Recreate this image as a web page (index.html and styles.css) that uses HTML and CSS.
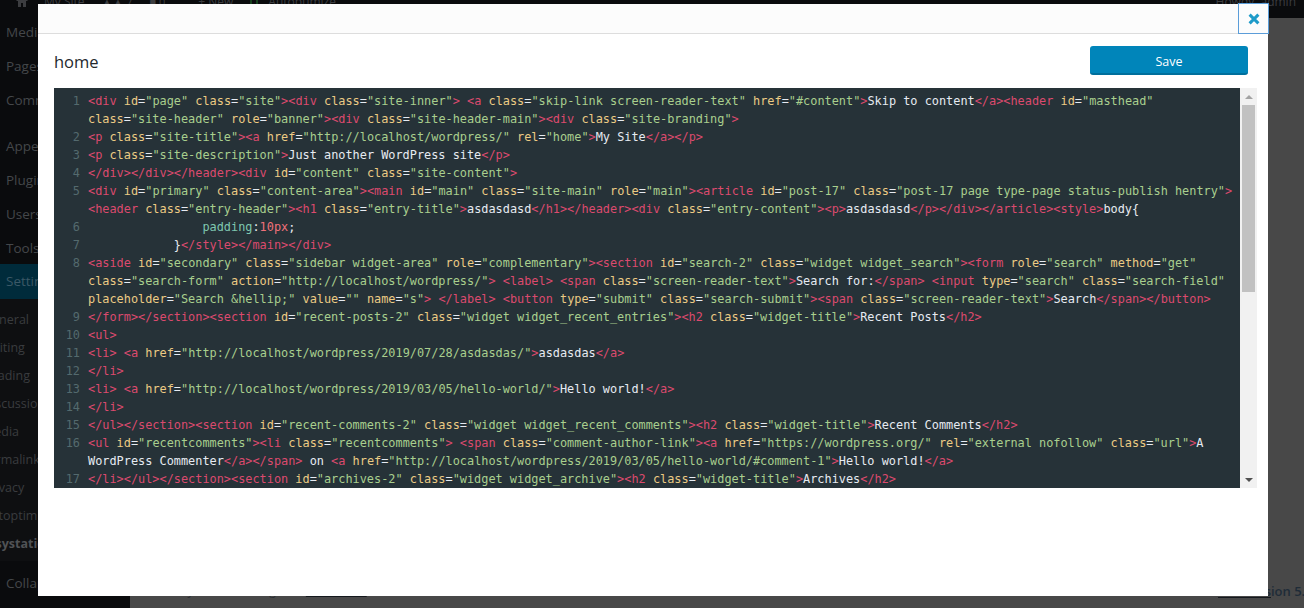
FILE: index.html
```html
<!DOCTYPE html>
<html lang="en">
<head>
<meta charset="utf-8">
<title>home</title>
<link rel="stylesheet" href="styles.css">
</head>
<body>
<div class="admin">
  <div class="topbar">
    <svg class="bar-icon" width="14" height="14" viewBox="0 0 14 14"><path d="M7 1 1 7h2v6h3V9h2v4h3V7h2z" fill="#3c3d40"/></svg>
    <span class="bar-item">My Site</span>
    <span class="bar-item bar-count">▲▲ 7</span>
    <span class="bar-item bar-count">■ 0</span>
    <span class="bar-item bar-new">+ New</span>
    <span class="bar-green"></span>
    <span class="bar-item">Autoptimize</span>
    <span class="bar-howdy">Howdy, admin</span>
  </div>
  <div class="below">
    <nav class="sidebar">
      <a class="menu-item">Media</a>
      <a class="menu-item">Pages</a>
      <a class="menu-item menu-last">Comments</a>
      <a class="menu-item">Appearance</a>
      <a class="menu-item">Plugins</a>
      <a class="menu-item">Users</a>
      <a class="menu-item">Tools</a>
      <a class="menu-item menu-active">Settings</a>
      <div class="submenu">
        <a class="sub-item">General</a>
        <a class="sub-item">Writing</a>
        <a class="sub-item">Reading</a>
        <a class="sub-item">Discussion</a>
        <a class="sub-item">Media</a>
        <a class="sub-item sub-perma">Permalinks</a>
        <a class="sub-item">Privacy</a>
        <a class="sub-item">Autoptimize</a>
        <a class="sub-item sub-bold">Easystatic</a>
      </div>
      <a class="menu-item menu-collapse">Collapse menu</a>
    </nav>
    <main class="content">
      <footer class="foot">
        <span>Thank you for creating with <span class="foot-link">WordPress</span>.</span>
        <span class="foot-version"><span class="foot-link">Get Vers</span>ion 5.3</span>
      </footer>
    </main>
  </div>
</div>

<section class="modal">
  <header class="modal-head">
    <button class="close" aria-label="Close">
      <svg width="12" height="12" viewBox="0 0 12 12"><path d="M1.6 1.6 10.4 10.4M10.4 1.6 1.6 10.4" stroke="#1e9bc9" stroke-width="3" fill="none"/></svg>
    </button>
  </header>
  <div class="modal-body">
    <div class="title-row">
      <h1 class="title">home</h1>
      <button class="save">Save</button>
    </div>
    <div class="editor">
      <div class="code">
<div class="line"><span class="num">1</span><div class="src"><i class="t">&lt;div</i> <i class="a">id</i>=<i class="s">"page"</i> <i class="a">class</i>=<i class="s">"site"</i><i class="t">&gt;&lt;div</i> <i class="a">class</i>=<i class="s">"site-inner"</i><i class="t">&gt;</i> <i class="t">&lt;a</i> <i class="a">class</i>=<i class="s">"skip-link screen-reader-text"</i> <i class="a">href</i>=<i class="s">"#content"</i><i class="t">&gt;</i>Skip to content<i class="t">&lt;/a&gt;&lt;header</i> <i class="a">id</i>=<i class="s">"masthead"</i> <i class="a">class</i>=<i class="s">"site-header"</i> <i class="a">role</i>=<i class="s">"banner"</i><i class="t">&gt;&lt;div</i> <i class="a">class</i>=<i class="s">"site-header-main"</i><i class="t">&gt;&lt;div</i> <i class="a">class</i>=<i class="s">"site-branding"</i><i class="t">&gt;</i></div></div>
<div class="line"><span class="num">2</span><div class="src"><i class="t">&lt;p</i> <i class="a">class</i>=<i class="s">"site-title"</i><i class="t">&gt;&lt;a</i> <i class="a">href</i>=<i class="s">"http://localhost/wordpress/"</i> <i class="a">rel</i>=<i class="s">"home"</i><i class="t">&gt;</i>My Site<i class="t">&lt;/a&gt;&lt;/p&gt;</i></div></div>
<div class="line"><span class="num">3</span><div class="src"><i class="t">&lt;p</i> <i class="a">class</i>=<i class="s">"site-description"</i><i class="t">&gt;</i>Just another WordPress site<i class="t">&lt;/p&gt;</i></div></div>
<div class="line"><span class="num">4</span><div class="src"><i class="t">&lt;/div&gt;&lt;/div&gt;&lt;/header&gt;&lt;div</i> <i class="a">id</i>=<i class="s">"content"</i> <i class="a">class</i>=<i class="s">"site-content"</i><i class="t">&gt;</i></div></div>
<div class="line"><span class="num">5</span><div class="src"><i class="t">&lt;div</i> <i class="a">id</i>=<i class="s">"primary"</i> <i class="a">class</i>=<i class="s">"content-area"</i><i class="t">&gt;&lt;main</i> <i class="a">id</i>=<i class="s">"main"</i> <i class="a">class</i>=<i class="s">"site-main"</i> <i class="a">role</i>=<i class="s">"main"</i><i class="t">&gt;&lt;article</i> <i class="a">id</i>=<i class="s">"post-17"</i> <i class="a">class</i>=<i class="s">"post-17 page type-page status-publish hentry"</i><i class="t">&gt;</i> <i class="t">&lt;header</i> <i class="a">class</i>=<i class="s">"entry-header"</i><i class="t">&gt;&lt;h1</i> <i class="a">class</i>=<i class="s">"entry-title"</i><i class="t">&gt;</i>asdasdasd<i class="t">&lt;/h1&gt;&lt;/header&gt;&lt;div</i> <i class="a">class</i>=<i class="s">"entry-content"</i><i class="t">&gt;&lt;p&gt;</i>asdasdasd<i class="t">&lt;/p&gt;&lt;/div&gt;&lt;/article&gt;&lt;style&gt;</i>body{</div></div>
<div class="line"><span class="num">6</span><div class="src">                <i class="p">padding</i>:<i class="n">10px</i>;</div></div>
<div class="line"><span class="num">7</span><div class="src">            }<i class="t">&lt;/style&gt;&lt;/main&gt;&lt;/div&gt;</i></div></div>
<div class="line"><span class="num">8</span><div class="src"><i class="t">&lt;aside</i> <i class="a">id</i>=<i class="s">"secondary"</i> <i class="a">class</i>=<i class="s">"sidebar widget-area"</i> <i class="a">role</i>=<i class="s">"complementary"</i><i class="t">&gt;&lt;section</i> <i class="a">id</i>=<i class="s">"search-2"</i> <i class="a">class</i>=<i class="s">"widget widget_search"</i><i class="t">&gt;&lt;form</i> <i class="a">role</i>=<i class="s">"search"</i> <i class="a">method</i>=<i class="s">"get"</i> <i class="a">class</i>=<i class="s">"search-form"</i> <i class="a">action</i>=<i class="s">"http://localhost/wordpress/"</i><i class="t">&gt;</i> <i class="t">&lt;label&gt;</i> <i class="t">&lt;span</i> <i class="a">class</i>=<i class="s">"screen-reader-text"</i><i class="t">&gt;</i>Search for:<i class="t">&lt;/span&gt;</i> <i class="t">&lt;input</i> <i class="a">type</i>=<i class="s">"search"</i> <i class="a">class</i>=<i class="s">"search-field"</i> <i class="a">placeholder</i>=<i class="s">"Search &amp;hellip;"</i> <i class="a">value</i>=<i class="s">""</i> <i class="a">name</i>=<i class="s">"s"</i><i class="t">&gt;</i> <i class="t">&lt;/label&gt;</i> <i class="t">&lt;button</i> <i class="a">type</i>=<i class="s">"submit"</i> <i class="a">class</i>=<i class="s">"search-submit"</i><i class="t">&gt;&lt;span</i> <i class="a">class</i>=<i class="s">"screen-reader-text"</i><i class="t">&gt;</i>Search<i class="t">&lt;/span&gt;&lt;/button&gt;</i></div></div>
<div class="line"><span class="num">9</span><div class="src"><i class="t">&lt;/form&gt;&lt;/section&gt;&lt;section</i> <i class="a">id</i>=<i class="s">"recent-posts-2"</i> <i class="a">class</i>=<i class="s">"widget widget_recent_entries"</i><i class="t">&gt;&lt;h2</i> <i class="a">class</i>=<i class="s">"widget-title"</i><i class="t">&gt;</i>Recent Posts<i class="t">&lt;/h2&gt;</i></div></div>
<div class="line"><span class="num">10</span><div class="src"><i class="t">&lt;ul&gt;</i></div></div>
<div class="line"><span class="num">11</span><div class="src"><i class="t">&lt;li&gt;</i> <i class="t">&lt;a</i> <i class="a">href</i>=<i class="s">"http://localhost/wordpress/2019/07/28/asdasdas/"</i><i class="t">&gt;</i>asdasdas<i class="t">&lt;/a&gt;</i></div></div>
<div class="line"><span class="num">12</span><div class="src"><i class="t">&lt;/li&gt;</i></div></div>
<div class="line"><span class="num">13</span><div class="src"><i class="t">&lt;li&gt;</i> <i class="t">&lt;a</i> <i class="a">href</i>=<i class="s">"http://localhost/wordpress/2019/03/05/hello-world/"</i><i class="t">&gt;</i>Hello world!<i class="t">&lt;/a&gt;</i></div></div>
<div class="line"><span class="num">14</span><div class="src"><i class="t">&lt;/li&gt;</i></div></div>
<div class="line"><span class="num">15</span><div class="src"><i class="t">&lt;/ul&gt;&lt;/section&gt;&lt;section</i> <i class="a">id</i>=<i class="s">"recent-comments-2"</i> <i class="a">class</i>=<i class="s">"widget widget_recent_comments"</i><i class="t">&gt;&lt;h2</i> <i class="a">class</i>=<i class="s">"widget-title"</i><i class="t">&gt;</i>Recent Comments<i class="t">&lt;/h2&gt;</i></div></div>
<div class="line"><span class="num">16</span><div class="src"><i class="t">&lt;ul</i> <i class="a">id</i>=<i class="s">"recentcomments"</i><i class="t">&gt;&lt;li</i> <i class="a">class</i>=<i class="s">"recentcomments"</i><i class="t">&gt;</i> <i class="t">&lt;span</i> <i class="a">class</i>=<i class="s">"comment-author-link"</i><i class="t">&gt;&lt;a</i> <i class="a">href</i>=<i class="s">"https://wordpress.org/"</i> <i class="a">rel</i>=<i class="s">"external nofollow"</i> <i class="a">class</i>=<i class="s">"url"</i><i class="t">&gt;</i>A WordPress Commenter<i class="t">&lt;/a&gt;&lt;/span&gt;</i> on <i class="t">&lt;a</i> <i class="a">href</i>=<i class="s">"http://localhost/wordpress/2019/03/05/hello-world/#comment-1"</i><i class="t">&gt;</i>Hello world!<i class="t">&lt;/a&gt;</i></div></div>
<div class="line"><span class="num">17</span><div class="src"><i class="t">&lt;/li&gt;&lt;/ul&gt;&lt;/section&gt;&lt;section</i> <i class="a">id</i>=<i class="s">"archives-2"</i> <i class="a">class</i>=<i class="s">"widget widget_archive"</i><i class="t">&gt;&lt;h2</i> <i class="a">class</i>=<i class="s">"widget-title"</i><i class="t">&gt;</i>Archives<i class="t">&lt;/h2&gt;</i></div></div>
      </div>
      <div class="scrollbar">
        <span class="sb-btn"><span class="arrow-up"></span></span>
        <span class="sb-thumb"></span>
        <span class="sb-rest"></span>
        <span class="sb-btn"><span class="arrow-down"></span></span>
      </div>
    </div>
  </div>
</section>
</body>
</html>
```
FILE: styles.css
```css
* { box-sizing: border-box; }
html, body { margin: 0; height: 100%; }
body { overflow: hidden; font-family: "Open Sans", "Liberation Sans", sans-serif; background: #484848; }

.admin { display: flex; flex-direction: column; width: 1304px; height: 608px; }

.topbar { height: 18px; flex: none; background: #0a0b0d; display: flex; align-items: flex-start; padding-left: 15px; color: #3c3d40; font-size: 12px; line-height: 18px; overflow: hidden; }
.topbar > * { margin-top: -7px; }
.bar-icon { margin-top: -6px; margin-right: 15px; }
.bar-item { margin-right: 17px; }
.bar-count { font-size: 11px; }
.bar-new { margin-left: 16px; }
.bar-green { width: 8px; height: 14px; border: 2px solid #14401c; margin-right: 10px; }
.bar-howdy { margin-left: auto; margin-right: 8px; }

.below { flex: 1; display: flex; min-height: 0; }

.sidebar { width: 130px; flex: none; background: #0a0b0d; display: flex; flex-direction: column; overflow: hidden; }
.menu-item { display: block; height: 34px; line-height: 34px; padding-left: 6px; font-size: 13.5px; color: #44474a; white-space: nowrap; flex: none; }
.menu-item:first-child { margin-top: -3px; }
.menu-last { margin-bottom: 12px; }
.menu-active { height: 35px; margin-top: -1px; background: #002b3b; color: #3b5866; }
.submenu { background: #0e0f11; padding: 7px 0; height: 262px; flex: none; }
.sub-item { display: block; height: 28px; line-height: 28px; font-size: 12.5px; color: #3a3c3f; margin-left: -17px; white-space: nowrap; }
.sub-perma { margin-left: -19px; }
.sub-bold { font-weight: 700; margin-left: -19px; color: #505255; }
.menu-collapse { margin-top: 5px; }

.content { flex: 1; display: flex; flex-direction: column; justify-content: flex-end; min-width: 0; overflow: hidden; }
.foot { display: flex; justify-content: space-between; height: 26px; padding-left: 20px; font-size: 12px; line-height: 18px; color: #2a2e33; white-space: nowrap; }
.foot-link { text-decoration: underline; text-decoration-color: #14181c; }
.foot-version { width: 86px; flex: none; font-size: 13px; font-weight: 600; color: #1f2c38; }

.modal { position: absolute; left: 38px; top: 4px; width: 1230px; height: 592px; background: #fff; display: flex; flex-direction: column; }
.modal-head { height: 30px; flex: none; background: #fcfcfc; border-bottom: 1px solid #ddd; display: flex; justify-content: flex-end; }
.close { width: 31px; height: 31px; margin: -1px -1px 0 0; padding: 0; background: transparent; border: 1px solid #5b9dd9; display: flex; align-items: center; justify-content: center; }
.modal-body { padding: 12px 11px 0 16px; }
.title-row { display: flex; justify-content: space-between; align-items: flex-start; padding-right: 9px; height: 42px; }
.title { margin: 4px 0 0; font-size: 16.5px; line-height: 24px; font-weight: 400; color: #23282d; }
.save { width: 158px; height: 29px; padding: 4px 0 0; background: #0085ba; border: 0; border-bottom: 2px solid #006f9c; border-radius: 3px; color: #fff; font: 12.5px/24px "Open Sans", "Liberation Sans", sans-serif; }

.editor { display: flex; height: 400px; background: #263238; }
.code { flex: 1; min-width: 0; height: 400px; padding-top: 4px; overflow: hidden; font-family: "DejaVu Sans Mono", "Liberation Mono", monospace; font-size: 11.88px; line-height: 18px; color: #e6ebf2; }
.line { display: flex; }
.num { width: 26px; flex: none; text-align: right; color: #546a6e; }
.src { width: 1152px; margin-left: 8px; white-space: pre-wrap; }
.src i { font-style: normal; }
.t { color: #dc4a6e; }
.a { color: #eccb84; }
.s { color: #a9cf8e; }
.p { color: #7fc8b0; }
.n { color: #f0717a; }

.scrollbar { width: 17px; flex: none; background: #f1f1f1; display: flex; flex-direction: column; }
.sb-btn { height: 17px; flex: none; display: flex; align-items: center; justify-content: center; }
.sb-thumb { height: 187px; margin: 0 2px; background: #c1c1c1; flex: none; }
.sb-rest { flex: 1; }
.arrow-up { border: 4px solid transparent; border-top: 0; border-bottom: 4px solid #a3a3a3; }
.arrow-down { border: 4px solid transparent; border-bottom: 0; border-top: 4px solid #505050; }
```
